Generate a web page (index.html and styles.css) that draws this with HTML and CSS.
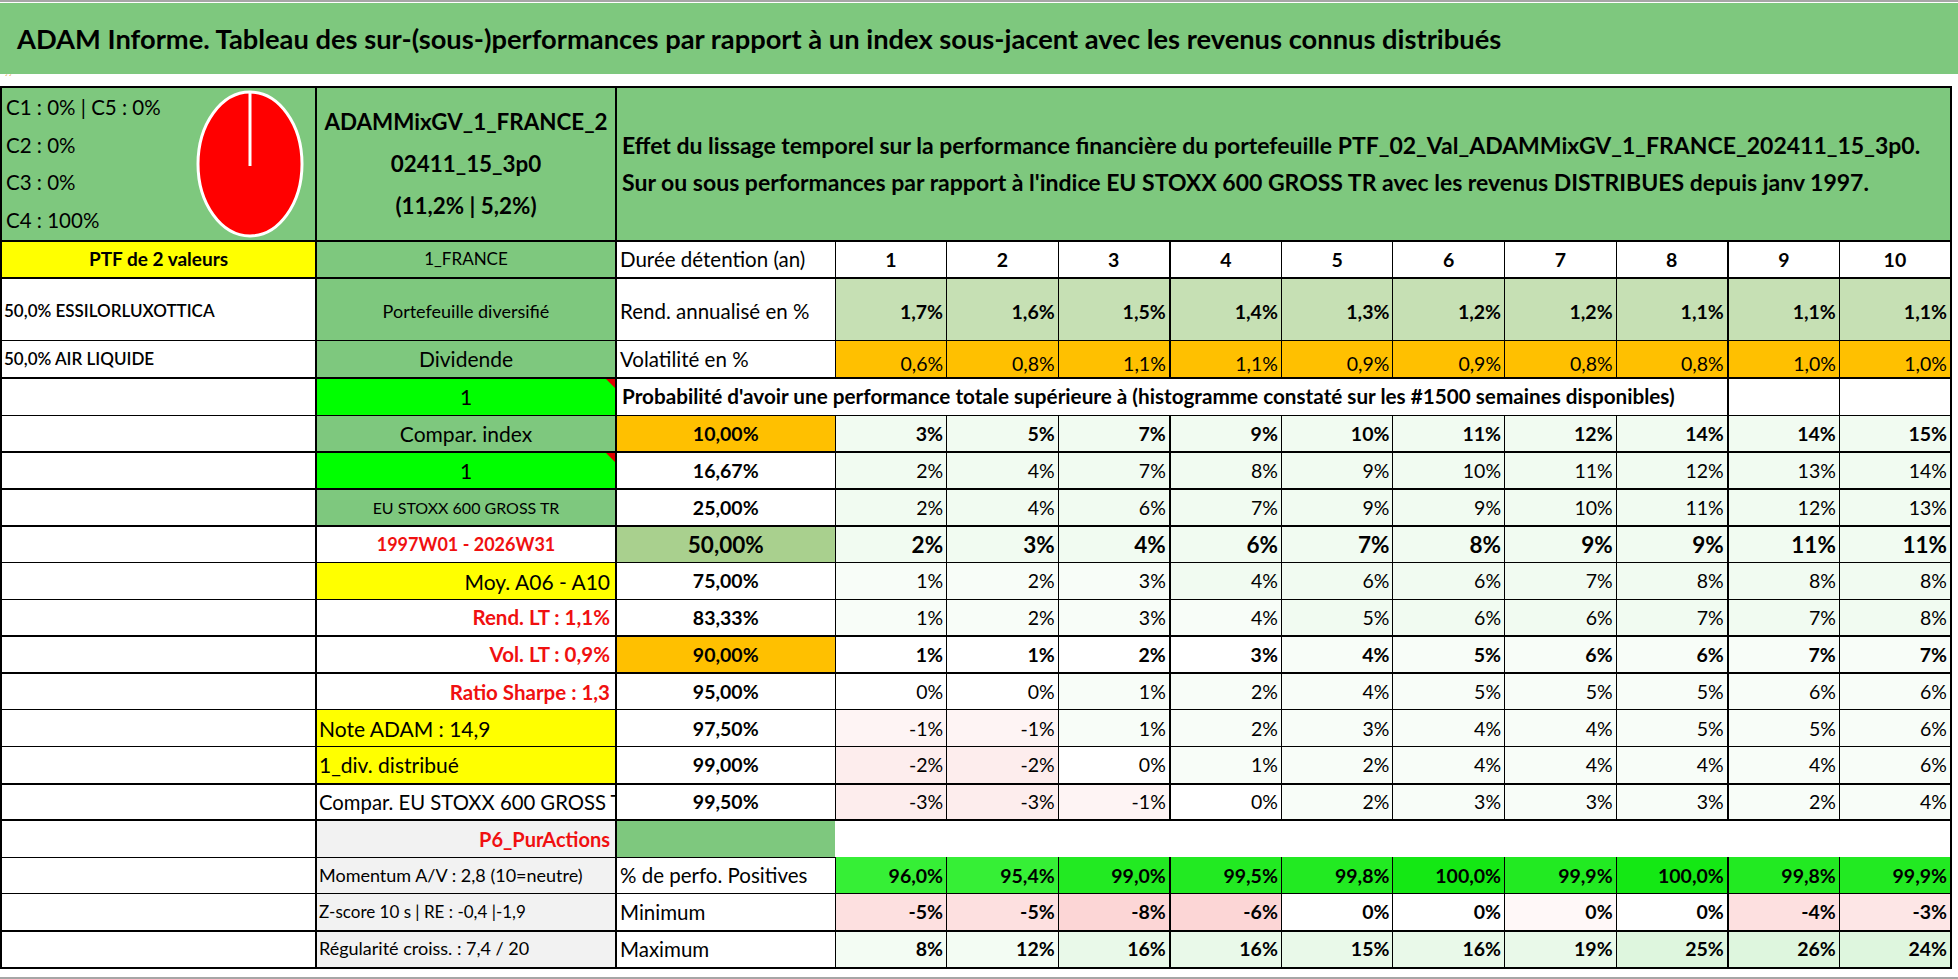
FILE: index.html
```html
<!DOCTYPE html>
<html lang="fr">
<head>
<meta charset="utf-8">
<title>ADAM Informe</title>
<link rel="stylesheet" href="styles.css">
</head>
<body>
<div class="topline"></div>
<div class="title">ADAM Informe. Tableau des sur-(sous-)performances par rapport à un index sous-jacent avec les revenus connus distribués</div>
<div class="gap"><span class="mark">´´</span></div>
<table class="sheet">
<colgroup>
<col class="ca"><col class="cb"><col class="cc">
<col class="cd"><col class="cd"><col class="cd tkr"><col class="cd"><col class="cd"><col class="cd"><col class="cd"><col class="cd tkr"><col class="cd"><col class="cd tkr">
</colgroup>
<tr class="hhead tk">
<td class="g alloc-cell"><div class="alloc"><div class="alloc-text"><div>C1 : 0% | C5 : 0%</div><div>C2 : 0%</div><div>C3 : 0%</div><div>C4 : 100%</div></div><svg class="pie" viewBox="0 0 110 150" width="110" height="150"><ellipse cx="55" cy="75" rx="52" ry="72" fill="#ff0000" stroke="#ffffff" stroke-width="3"/><line x1="55" y1="3" x2="55" y2="77" stroke="#ffffff" stroke-width="3"/></svg></div></td>
<td class="g name">ADAMMixGV_1_FRANCE_2<br>02411_15_3p0<br>(11,2% | 5,2%)</td>
<td class="g effet" colspan="11"><div>Effet du lissage temporel sur la performance financière du portefeuille PTF_02_Val_ADAMMixGV_1_FRANCE_202411_15_3p0.</div><div>Sur ou sous performances par rapport à l'indice EU STOXX 600 GROSS TR avec les revenus DISTRIBUES depuis janv 1997.</div></td>
</tr>
<tr class="h37 tk">
<td class="y ctr b ptf">PTF de 2 valeurs</td>
<td class="g ctr s17">1_FRANCE</td>
<td class="lbl">Durée détention (an)</td>
<td class="ctr b">1</td><td class="ctr b">2</td><td class="ctr b">3</td><td class="ctr b">4</td><td class="ctr b">5</td><td class="ctr b">6</td><td class="ctr b">7</td><td class="ctr b">8</td><td class="ctr b">9</td><td class="ctr b">10</td>
</tr>
<tr class="h63 low">
<td class="a17 sb">50,0% ESSILORLUXOTTICA</td>
<td class="g ctr s18">Portefeuille diversifié</td>
<td class="lbl">Rend. annualisé en %</td>
<td class="rg num b">1,7%</td><td class="rg num b">1,6%</td><td class="rg num b">1,5%</td><td class="rg num b">1,4%</td><td class="rg num b">1,3%</td><td class="rg num b">1,2%</td><td class="rg num b">1,2%</td><td class="rg num b">1,1%</td><td class="rg num b">1,1%</td><td class="rg num b">1,1%</td>
</tr>
<tr class="h37 tk">
<td class="a17 sb">50,0% AIR LIQUIDE</td>
<td class="g ctr s21">Dividende</td>
<td class="lbl">Volatilité en %</td>
<td class="o num bot">0,6%</td><td class="o num bot">0,8%</td><td class="o num bot">1,1%</td><td class="o num bot">1,1%</td><td class="o num bot">0,9%</td><td class="o num bot">0,9%</td><td class="o num bot">0,8%</td><td class="o num bot">0,8%</td><td class="o num bot">1,0%</td><td class="o num bot">1,0%</td>
</tr>
<tr class="h38">
<td></td>
<td class="bg ctr tri s21">1</td>
<td class="prob b" colspan="9">Probabilité d'avoir une performance totale supérieure à (histogramme constaté sur les #1500 semaines disponibles)</td>
<td></td><td></td>
</tr>
<tr class="h37 tk">
<td></td>
<td class="g ctr s21">Compar. index</td>
<td class="o ctr b">10,00%</td>
<td class="l1 num b">3%</td><td class="l1 num b">5%</td><td class="l1 num b">7%</td><td class="l1 num b">9%</td><td class="l1 num b">10%</td><td class="l1 num b">11%</td><td class="l1 num b">12%</td><td class="l1 num b">14%</td><td class="l1 num b">14%</td><td class="l1 num b">15%</td>
</tr>
<tr class="h37 tk">
<td></td>
<td class="bg ctr tri s21">1</td>
<td class="ctr b">16,67%</td>
<td class="l1 num">2%</td><td class="l1 num">4%</td><td class="l1 num">7%</td><td class="l1 num">8%</td><td class="l1 num">9%</td><td class="l1 num">10%</td><td class="l1 num">11%</td><td class="l1 num">12%</td><td class="l1 num">13%</td><td class="l1 num">14%</td>
</tr>
<tr class="h37 tk">
<td></td>
<td class="g ctr s16">EU STOXX 600 GROSS TR</td>
<td class="ctr b">25,00%</td>
<td class="l1 num">2%</td><td class="l1 num">4%</td><td class="l1 num">6%</td><td class="l1 num">7%</td><td class="l1 num">9%</td><td class="l1 num">9%</td><td class="l1 num">10%</td><td class="l1 num">11%</td><td class="l1 num">12%</td><td class="l1 num">13%</td>
</tr>
<tr class="h37">
<td></td>
<td class="ctr red rb s18">1997W01 - 2026W31</td>
<td class="mg ctr b big">50,00%</td>
<td class="l1 num b big">2%</td><td class="l1 num b big">3%</td><td class="l1 num b big">4%</td><td class="l1 num b big">6%</td><td class="l1 num b big">7%</td><td class="l1 num b big">8%</td><td class="l1 num b big">9%</td><td class="l1 num b big">9%</td><td class="l1 num b big">11%</td><td class="l1 num b big">11%</td>
</tr>
<tr class="h37">
<td></td>
<td class="y num s21 rt">Moy. A06 - A10</td>
<td class="ctr b">75,00%</td>
<td class="l0 num">1%</td><td class="l0 num">2%</td><td class="l0 num">3%</td><td class="l1 num">4%</td><td class="l1 num">6%</td><td class="l1 num">6%</td><td class="l1 num">7%</td><td class="l1 num">8%</td><td class="l1 num">8%</td><td class="l1 num">8%</td>
</tr>
<tr class="h37 tk">
<td></td>
<td class="num red rb rt rs">Rend. LT : 1,1%</td>
<td class="ctr b">83,33%</td>
<td class="l0 num">1%</td><td class="l0 num">2%</td><td class="l0 num">3%</td><td class="l0 num">4%</td><td class="l1 num">5%</td><td class="l1 num">6%</td><td class="l1 num">6%</td><td class="l1 num">7%</td><td class="l1 num">7%</td><td class="l1 num">8%</td>
</tr>
<tr class="h37 tk">
<td></td>
<td class="num red rb rt rs">Vol. LT : 0,9%</td>
<td class="o ctr b">90,00%</td>
<td class="w num b">1%</td><td class="w num b">1%</td><td class="w num b">2%</td><td class="w num b">3%</td><td class="l0 num b">4%</td><td class="l0 num b">5%</td><td class="l0 num b">6%</td><td class="l0 num b">6%</td><td class="l0 num b">7%</td><td class="l0 num b">7%</td>
</tr>
<tr class="h37">
<td></td>
<td class="num red rb rt rs">Ratio Sharpe : 1,3</td>
<td class="ctr b">95,00%</td>
<td class="w num">0%</td><td class="w num">0%</td><td class="l0 num">1%</td><td class="l0 num">2%</td><td class="l0 num">4%</td><td class="l0 num">5%</td><td class="l0 num">5%</td><td class="l0 num">5%</td><td class="l0 num">6%</td><td class="l0 num">6%</td>
</tr>
<tr class="h37">
<td></td>
<td class="y s21 lt">Note ADAM : 14,9</td>
<td class="ctr b">97,50%</td>
<td class="p0 num">-1%</td><td class="p0 num">-1%</td><td class="l0 num">1%</td><td class="l0 num">2%</td><td class="l0 num">3%</td><td class="l0 num">4%</td><td class="l0 num">4%</td><td class="l0 num">5%</td><td class="l0 num">5%</td><td class="l0 num">6%</td>
</tr>
<tr class="h37 tk">
<td></td>
<td class="y s21 lt">1_div. distribué</td>
<td class="ctr b">99,00%</td>
<td class="p1 num">-2%</td><td class="p1 num">-2%</td><td class="w num">0%</td><td class="l0 num">1%</td><td class="l0 num">2%</td><td class="l0 num">4%</td><td class="l0 num">4%</td><td class="l0 num">4%</td><td class="l0 num">4%</td><td class="l0 num">6%</td>
</tr>
<tr class="h37 tk">
<td></td>
<td class="lt clip">Compar. EU STOXX 600 GROSS TR</td>
<td class="ctr b">99,50%</td>
<td class="p1 num">-3%</td><td class="p1 num">-3%</td><td class="p0 num">-1%</td><td class="w num">0%</td><td class="l0 num">2%</td><td class="l0 num">3%</td><td class="l0 num">3%</td><td class="l0 num">3%</td><td class="l0 num">2%</td><td class="l0 num">4%</td>
</tr>
<tr class="h37 p6">
<td></td>
<td class="gr num red b s20 rt">P6_PurActions</td>
<td class="g"></td>
<td class="none"></td><td class="none"></td><td class="none"></td><td class="none"></td><td class="none"></td><td class="none"></td><td class="none"></td><td class="none"></td><td class="none"></td><td class="none last"></td>
</tr>
<tr class="h37">
<td></td>
<td class="gr s18 lt">Momentum A/V : 2,8 (10=neutre)</td>
<td class="lbl">% de perfo. Positives</td>
<td class="v1 num b">96,0%</td><td class="v1 num b">95,4%</td><td class="v2 num b">99,0%</td><td class="v2 num b">99,5%</td><td class="v2 num b">99,8%</td><td class="v3 num b">100,0%</td><td class="v2 num b">99,9%</td><td class="v3 num b">100,0%</td><td class="v2 num b">99,8%</td><td class="v2 num b">99,9%</td>
</tr>
<tr class="h37 tk">
<td></td>
<td class="gr s17 lt">Z-score 10 s | RE : -0,4 |-1,9</td>
<td class="lbl">Minimum</td>
<td class="m2 num b">-5%</td><td class="m2 num b">-5%</td><td class="m3 num b">-8%</td><td class="m3 num b">-6%</td><td class="w num b">0%</td><td class="w num b">0%</td><td class="p00 num b">0%</td><td class="w num b">0%</td><td class="m2 num b">-4%</td><td class="m1 num b">-3%</td>
</tr>
<tr class="h37 tk">
<td></td>
<td class="gr s18 lt">Régularité croiss. : 7,4 / 20</td>
<td class="lbl">Maximum</td>
<td class="x1 num b">8%</td><td class="x1 num b">12%</td><td class="x2 num b">16%</td><td class="x2 num b">16%</td><td class="x2 num b">15%</td><td class="x2 num b">16%</td><td class="x2 num b">19%</td><td class="x3 num b">25%</td><td class="x3 num b">26%</td><td class="x3 num b">24%</td>
</tr>
</table>
<div class="bottomline"></div>
</body>
</html>
```

FILE: styles.css
```css
html, body {
  margin: 0;
  padding: 0;
  background: #ffffff;
}
body {
  font-family: Lato, "Open Sans", "Liberation Sans", sans-serif;
  color: #000000;
  width: 1958px;
  overflow: hidden;
}
.topline {
  height: 2px;
  background: #a6a6a6;
}
.title {
  margin-top: 1px;
  height: 71px;
  line-height: 71px;
  background: #7ec87e;
  font-weight: 700;
  font-size: 27.3px;
  padding-left: 17px;
  white-space: nowrap;
}
.gap {
  height: 12px;
  position: relative;
}
.gap .mark {
  position: absolute;
  left: 4px;
  top: -2px;
  font-size: 10px;
  color: #e0a030;
}
table.sheet {
  border-collapse: collapse;
  table-layout: fixed;
  width: 1952px;
  border: 2px solid #000;
}
col.ca { width: 315px; border-right: 2px solid #000; }
col.cb { width: 300px; border-right: 2px solid #000; }
col.cc { width: 219px; }
col.tkr { border-right: 2px solid #000; }
.sheet td {
  border: 1px solid #000;
  padding: 0 3px;
  font-size: 19.5px;
  line-height: 1.2;
  white-space: nowrap;
  overflow: hidden;
  vertical-align: middle;
  position: relative;
}
.sheet tr.tk > td { border-bottom-width: 2px; }
tr.hhead { height: 154px; }
tr.h37 { height: 36.8px; }
tr.h38 { height: 38px; }
tr.h63 { height: 63px; }
tr.low > td { padding-top: 4px; }

.alloc-cell { vertical-align: top !important; padding: 0 !important; }
.alloc {
  display: grid;
  grid-template-columns: 189px 110px;
  padding-left: 4px;
}
.alloc-text {
  padding-top: 1px;
  font-size: 20.5px;
  line-height: 37.5px;
}
.pie { display: block; margin-top: 1px; }

.name {
  text-align: center;
  font-weight: 700;
  font-size: 22.4px !important;
  line-height: 42px !important;
  padding: 0 !important;
}
.effet {
  font-weight: 700;
  font-size: 23px !important;
  line-height: 37px !important;
  padding-left: 5px !important;
}
.lbl { padding-left: 3px; font-size: 20.5px !important; }
.prob { padding-left: 5px !important; font-size: 20.7px !important; }
.ptf { font-size: 19px !important; }

.ctr { text-align: center; }
.num { text-align: right; }
.lt { padding-left: 2px !important; }
.rt { padding-right: 5px !important; }
.b { font-weight: 700; }
.sb { font-weight: 600; }
.rb { font-weight: 700; }
.rs { font-size: 20.5px !important; }
.bot { vertical-align: bottom !important; padding-bottom: 1px !important; }
.big { font-size: 22.5px !important; }
.a17 { font-size: 17px !important; padding-left: 2px !important; }
.s16 { font-size: 16px !important; }
.s17 { font-size: 17px !important; }
.s18 { font-size: 18px !important; }
.s20 { font-size: 20px !important; }
.s21 { font-size: 21px !important; }
.red { color: #f01010; }
.clip { text-overflow: clip; font-size: 20.3px !important; padding-right: 0 !important; }

.g { background: #7ec87e; }
.y { background: #ffff00; }
.o { background: #ffc000; }
.rg { background: #c6e0b4; }
.mg { background: #a9d08e; }
.bg { background: #00ff00; }
.gr { background: #f2f2f2; }
.w { background: #ffffff; }
.l0 { background: #f8fdf8; }
.l1 { background: #f1fbf1; }
.p00 { background: #fff8f8; }
.p0 { background: #fef4f4; }
.p1 { background: #fdeded; }
.m1 { background: #fde6e6; }
.m2 { background: #fde0e0; }
.m3 { background: #fcd6d6; }
.v1 { background: #36ef36; }
.v2 { background: #22ea22; }
.v3 { background: #14e814; }
.x1 { background: #f3fcf3; }
.x2 { background: #e9f9e9; }
.x3 { background: #def6de; }

.tri::after {
  content: "";
  position: absolute;
  top: 0;
  right: 0;
  border-top: 9px solid #e00000;
  border-left: 9px solid transparent;
}

tr.p6 > td.none {
  border-left-style: hidden;
  border-right-style: hidden;
  border-bottom-style: hidden;
}
tr.p6 > td.none.last {
  border-right-style: solid;
  border-right-width: 2px;
}
.bottomline {
  margin-top: 8px;
  height: 2px;
  background: #a6a6a6;
}
```
